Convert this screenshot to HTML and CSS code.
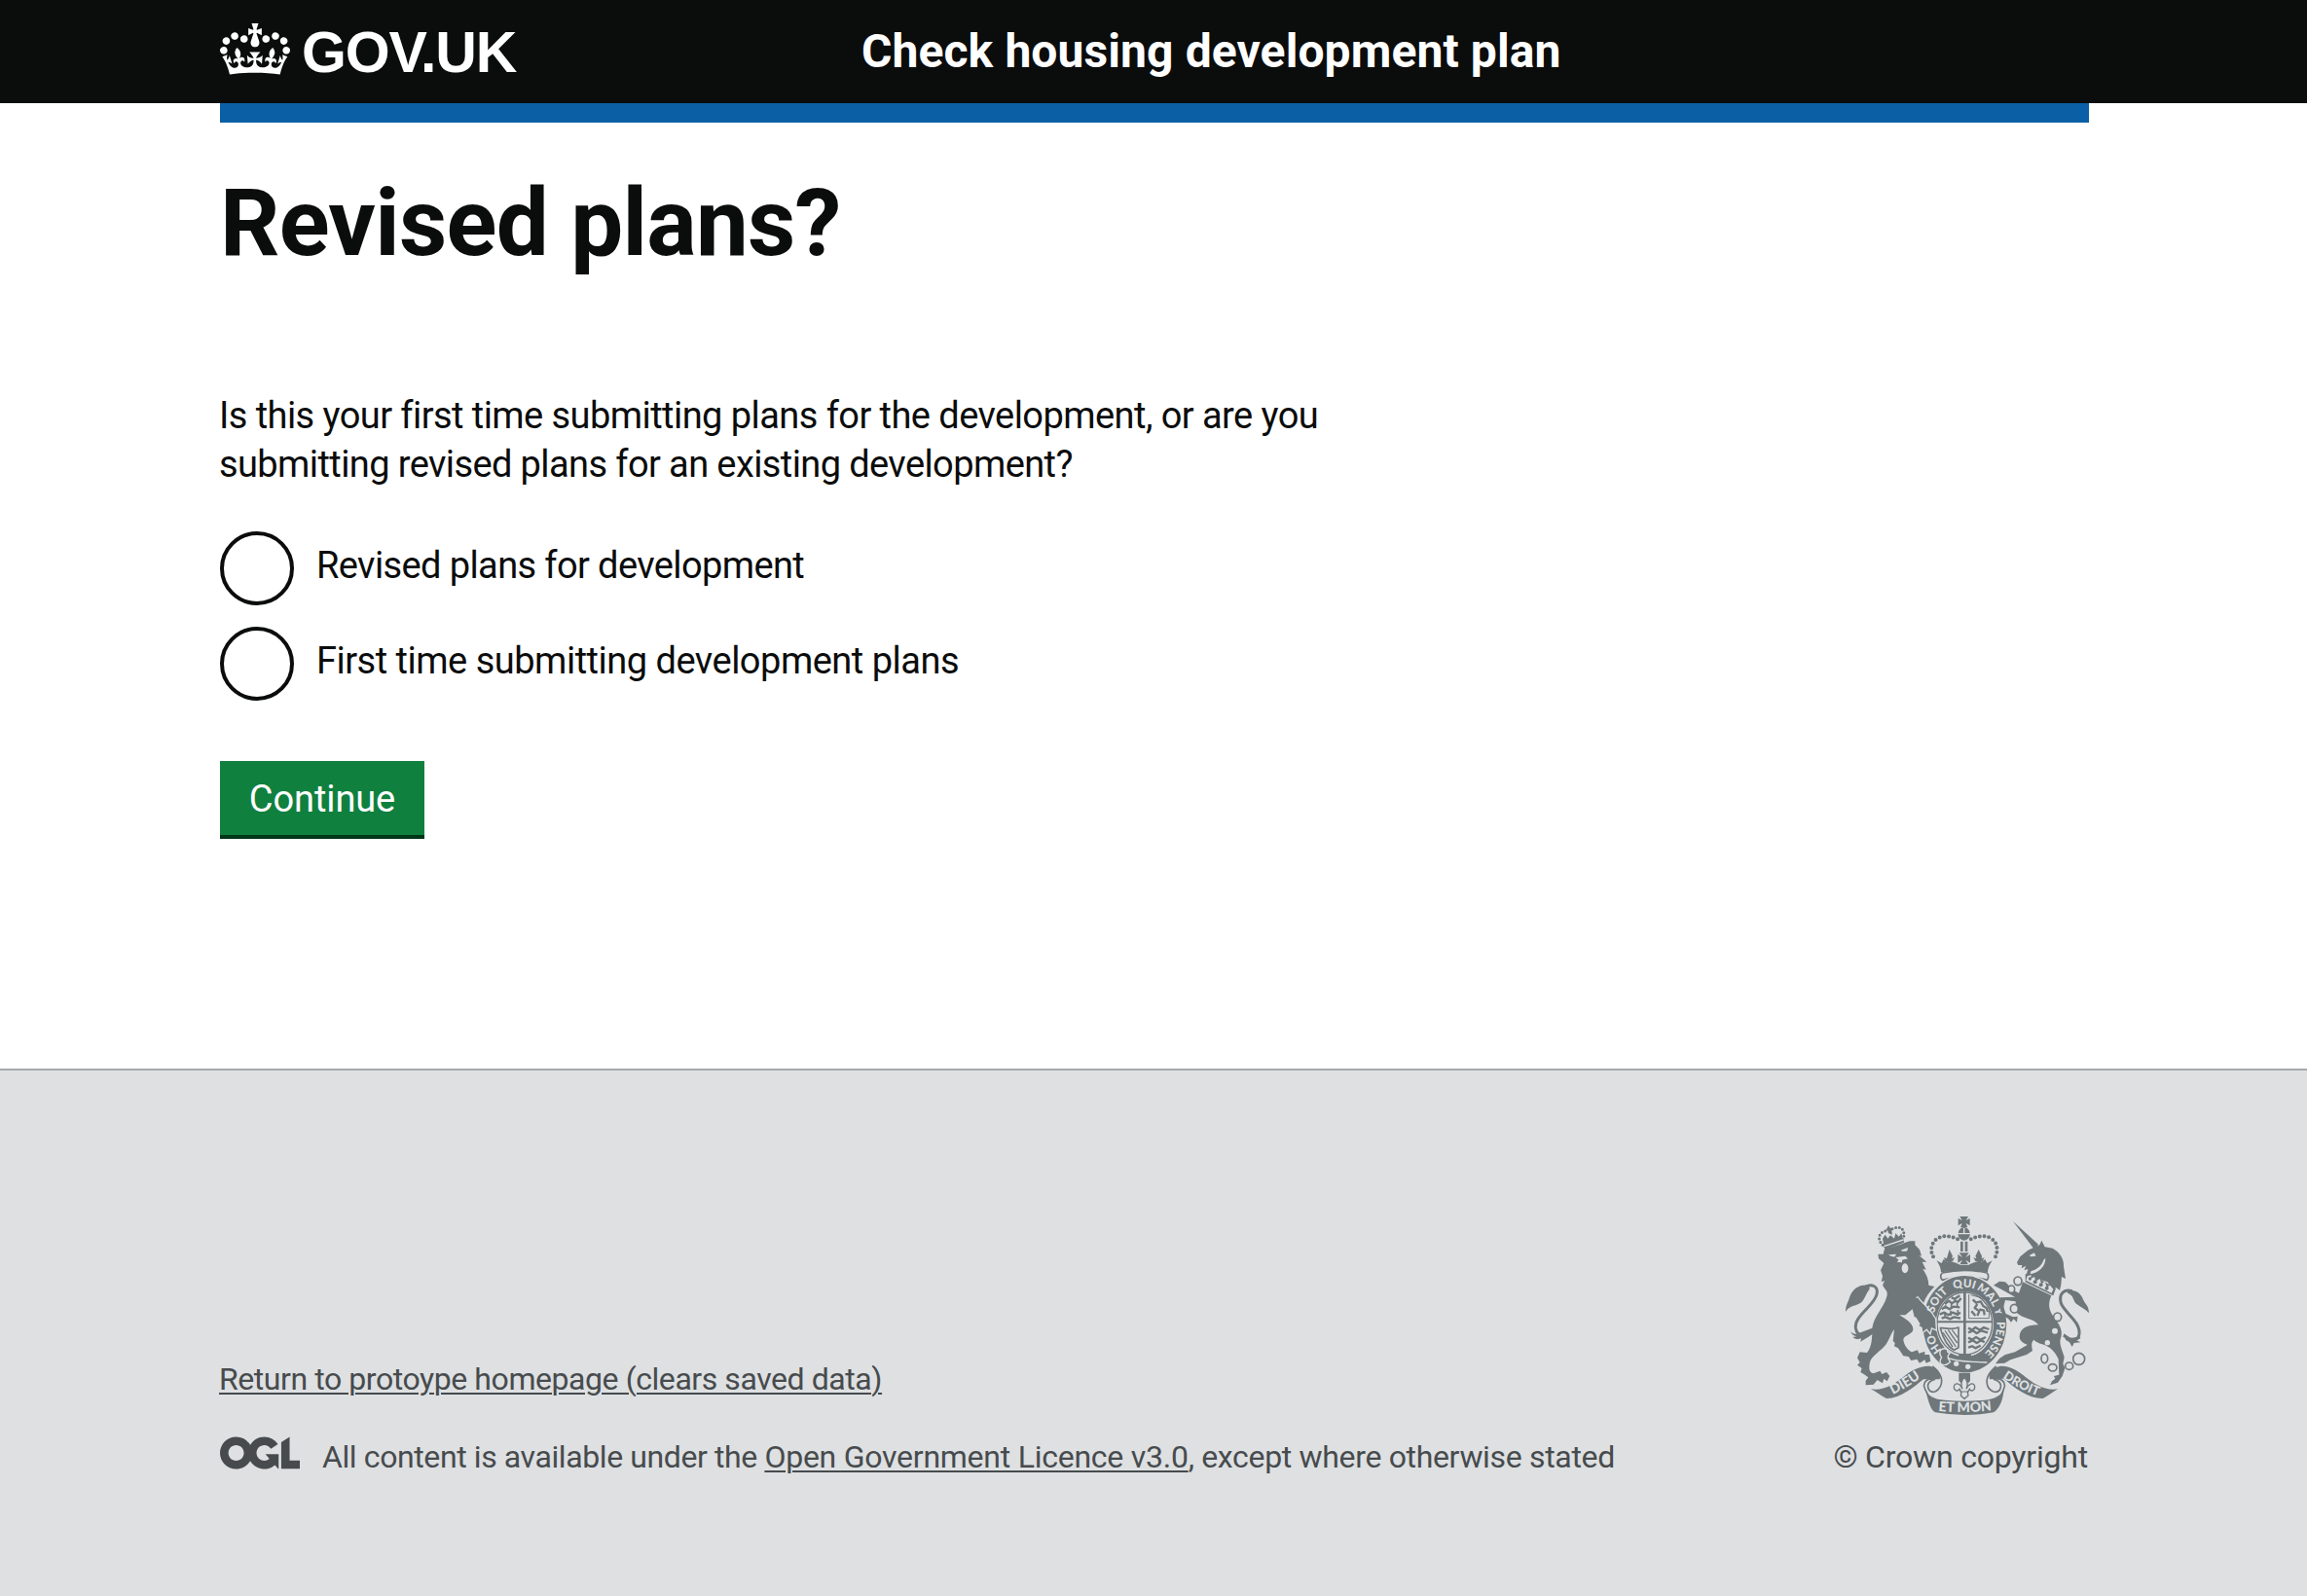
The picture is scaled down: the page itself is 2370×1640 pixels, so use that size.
FILE: index.html
```html
<!DOCTYPE html>
<html lang="en">
<head>
<meta charset="utf-8">
<title>Revised plans? - Check housing development plan</title>
<link rel="stylesheet" href="styles.css">
</head>
<body>
<header class="header">
  <div class="container header-row">
    <a class="logo" href="#">
      <svg class="logo-crown" viewBox="0 0 132 97" width="72" height="53" aria-hidden="true"><path fill="currentColor" fill-rule="evenodd" d="M25 30.2c3.5 1.5 7.7-.2 9.1-3.7 1.5-3.6-.2-7.8-3.9-9.2-3.6-1.4-7.6.3-9.1 3.9-1.4 3.5.3 7.5 3.9 9zM9 39.5c3.6 1.5 7.8-.2 9.2-3.7 1.5-3.6-.2-7.8-3.9-9.1-3.6-1.5-7.6.2-9.1 3.8-1.4 3.5.3 7.5 3.8 9zM4.4 57.2c3.5 1.5 7.7-.2 9.1-3.8 1.5-3.6-.2-7.7-3.9-9.1-3.5-1.5-7.6.3-9.1 3.8-1.4 3.5.3 7.6 3.9 9.1zm38.3-21.4c3.5 1.5 7.7-.2 9.1-3.8 1.5-3.6-.2-7.7-3.9-9.1-3.6-1.5-7.6.3-9.1 3.8-1.3 3.6.4 7.7 3.9 9.1zm64.4-5.6c-3.6 1.5-7.8-.2-9.1-3.7-1.5-3.6.2-7.8 3.8-9.2 3.6-1.4 7.7.3 9.2 3.9 1.3 3.5-.4 7.5-3.9 9zm15.9 9.3c-3.6 1.5-7.7-.2-9.1-3.7-1.5-3.6.2-7.8 3.7-9.1 3.6-1.5 7.7.2 9.2 3.8 1.5 3.5-.3 7.5-3.8 9zm4.7 17.7c-3.6 1.5-7.8-.2-9.2-3.8-1.5-3.6.2-7.7 3.9-9.1 3.6-1.5 7.7.3 9.2 3.8 1.3 3.5-.4 7.6-3.9 9.1zM89.3 35.8c-3.6 1.5-7.8-.2-9.2-3.8-1.4-3.6.2-7.7 3.9-9.1 3.6-1.5 7.7.3 9.2 3.8 1.4 3.6-.3 7.7-3.9 9.1zM69.7 17.7l8.9 4.7V9.3l-8.9 2.8c-.2-.3-.5-.6-.9-.9L72.4 0H59.6l3.5 11.2c-.3.3-.6.5-.9.9l-8.8-2.8v13.1l8.8-4.7c.3.3.6.7.9.9l-5 15.4v.1c-.2.8-.4 1.6-.4 2.4 0 4.1 3.1 7.5 7 8.1h.2c.3 0 .7.1 1 .1.4 0 .7 0 1-.1h.2c4-.6 7.1-4.1 7.1-8.1 0-.8-.1-1.7-.4-2.4V34l-5.1-15.4c.4-.2.7-.6 1-.9zM66 92.8c16.9 0 32.8 1.1 47.1 3.2 4-16.9 8.9-26.7 14-33.5l-9.6-3.4c1 4.9 1.1 7.2 0 10.2-1.5-1.4-3-4.3-4.2-8.7L108.6 76c2.8-2 5-3.2 7.5-3.3-4.4 9.4-10 11.9-13.6 11.2-4.3-.8-6.3-4.6-5.6-7.9 1-4.7 5.7-5.9 8-.5 4.3-8.7-3-11.4-7.6-8.8 7.1-7.2 7.9-13.5 2.1-21.1-8 6.1-8.1 12.3-4.5 20.8-4.7-5.4-12.1-2.5-9.5 6.2 3.4-5.2 7.9-2 7.2 3.1-.6 4.3-6.4 7.8-13.5 7.2-10.3-.9-10.9-8-11.2-13.8 2.5-.5 7.1 1.8 11 7.3L80.2 60c-4.1 4.4-8 5.3-12.3 5.4 1.4-4.4 8-11.6 8-11.6H55.5s6.4 7.2 7.9 11.6c-4.2-.1-8-1-12.3-5.4l1.4 16.4c3.9-5.5 8.5-7.7 10.9-7.3-.3 5.8-.9 12.8-11.1 13.8-7.2.6-12.9-2.9-13.5-7.2-.7-5 3.8-8.3 7.1-3.1 2.7-8.7-4.6-11.6-9.4-6.2 3.7-8.5 3.6-14.7-4.6-20.8-5.8 7.6-5 13.9 2.2 21.1-4.7-2.6-11.9.1-7.7 8.8 2.3-5.5 7.1-4.2 8.1.5.7 3.3-1.3 7.1-5.7 7.9-3.5.7-9-1.8-13.5-11.2 2.5.1 4.7 1.3 7.5 3.3l-4.7-15.4c-1.2 4.4-2.7 7.2-4.3 8.7-1.1-3-.9-5.3 0-10.2l-9.5 3.4c5 6.9 9.9 16.7 14 33.5 14.8-2.1 30.8-3.2 47.7-3.2z"/></svg>
      <span class="logo-text">GOV.UK</span>
    </a>
    <a class="service-name" href="#">Check housing development plan</a>
  </div>
</header>

<div class="container">
  <div class="phase-bar"></div>
  <main class="main">
    <h1 class="heading">Revised plans?</h1>
    <form class="form">
      <p class="question">Is this your first time submitting plans for the development, or are you <span class="question-rest">submitting revised plans for an existing development?</span></p>
      <div class="radios">
        <label class="radio"><input class="radio-input" type="radio" name="plans"><span class="radio-label radio-label-tight">Revised plans for development</span></label>
        <label class="radio"><input class="radio-input" type="radio" name="plans"><span class="radio-label">First time submitting development plans</span></label>
      </div>
      <button class="button" type="button">Continue</button>
    </form>
  </main>
</div>

<footer class="footer">
  <div class="container footer-row">
    <div class="footer-meta">
      <a class="footer-link return-link" href="#">Return to protoype homepage (clears saved data)</a>
      <div class="licence">
        <svg class="ogl" viewBox="0 0 483.2 195.7" width="82" height="34" aria-hidden="true"><path fill="currentColor" d="M421.5 142.8V.1l-50.7 32.3v161.1h112.4v-50.7zm-122.3-9.6A47.12 47.12 0 0 1 221 97.8c0-26 21.1-47.1 47.1-47.1 16.7 0 31.4 8.7 39.7 21.8l42.7-27.2A97.63 97.63 0 0 0 268.1 0c-36.5 0-68.3 20.1-85.1 49.7A98 98 0 0 0 97.8 0C43.9 0 0 43.9 0 97.8s43.9 97.8 97.8 97.8c36.5 0 68.3-20.1 85.1-49.7a97.76 97.76 0 0 0 149.6 25.4l19.4 22.2h3v-87.8h-80l24.3 27.5zM97.8 145c-26 0-47.1-21.1-47.1-47.1s21.1-47.1 47.1-47.1 47.1 21.1 47.1 47.1S123.8 145 97.8 145"/></svg>
        <span class="licence-text">All content is available under the <a class="footer-link licence-link" href="#">Open Government Licence v3.0</a><span class="licence-end">, except where otherwise stated</span></span>
      </div>
    </div>
    <a class="copyright" href="#">
      <svg class="arms" viewBox="78 60 750 612" width="250" height="204" aria-hidden="true">
        <defs>
          <path id="motto-ring" d="M445 506A99 114 0 0 1 346 392A99 114 0 0 1 544 392A99 114 0 0 1 445 506"/>
          <path id="scroll-left" d="M200 620Q262 594 336 538"/>
          <path id="scroll-mid" d="M340 657Q445 670 552 655"/>
          <path id="scroll-right" d="M538 540Q610 596 698 622"/>
        </defs>

        <!-- lion's tail -->
        <path fill="none" stroke="currentColor" stroke-width="9" d="M132 282C158 262 180 276 174 300C166 336 104 366 109 404C114 432 142 434 166 412"/>
        <path d="M150 272C122 268 98 282 90 310C86 326 78 332 78 354C88 336 104 338 122 328C138 318 140 296 152 284zM94 414C100 422 108 424 118 420L166 402L160 422C146 434 132 440 124 446L126 436C116 440 106 438 100 432L112 430C104 428 96 424 94 414z"/>

        <!-- lion -->
        <path d="M178 176L194 176L198 160C228 154 258 142 276 136L292 136L292 148L306 162L312 182L304 180L328 200L314 200L326 224L316 222C328 240 334 256 334 272L352 276C336 294 324 308 318 328L296 310C312 334 340 346 350 364L354 408L342 402L338 416L330 406L320 416L318 404L300 396L314 390L302 372L290 370L284 346L262 364L244 364C262 376 286 388 286 408C286 424 254 426 256 442C260 460 270 472 282 478L300 472L304 482L322 476L322 486L336 486L340 506L326 512L322 502L306 512L298 500L280 504L272 492L256 490L240 466L228 460L230 450L224 444L228 408C214 426 212 446 196 462C176 482 154 494 152 514C150 530 150 540 164 544L184 536L190 546L204 540L214 552L206 568L196 560L192 574L176 564L164 578L140 580L140 566L148 556L134 546L124 540L128 528L114 518L122 510L114 496L122 478L144 480C160 460 160 430 160 404C164 370 196 340 204 310C210 294 202 286 200 284L192 272L198 258L188 262L192 244L186 226L196 204L180 190z"/>
        <g class="cut">
          <path d="M210 178L234 176L230 184Q218 186 210 178zM248 164L270 156L268 166Q256 170 248 164zM232 186L262 182L270 190L252 194L252 202L236 200L242 194z"/>
          <ellipse cx="261" cy="220" rx="10" ry="15"/>
        </g>

        <!-- lion's crown -->
        <path d="M190 148L256 126L258 140L202 162zM210 88L216 96L224 96L220 104L222 116L210 112L208 104L202 102L206 96zM192 128L200 116L208 128L216 118L228 128L232 112L242 122L250 112L254 128L196 150z"/>
        <g fill="none" stroke="currentColor" stroke-width="9" stroke-linecap="round" stroke-dasharray="0 11"><path d="M192 148C170 124 186 104 210 104"/><path d="M222 98C244 88 264 96 256 128"/></g>
        <path class="cut-line" d="M196 152L256 132"/>

        <!-- royal crown -->
        <path d="M430 60H456L449 72L461 66V88L449 81L454 94H432L437 81L425 88V66L437 72zM425 111Q428 95 443 94Q458 95 461 111zM424 115H462Q458 133 443 134Q428 133 424 115zM432 137H440V168H432zM446 137H454V168H446z"/>
        <path class="cut-line" stroke-width="3" d="M443 96V111"/>
        <g fill="none" stroke="currentColor" stroke-width="12" stroke-linecap="round" stroke-dasharray="0 14.2"><path d="M348 184C338 166 340 140 364 126C384 116 406 122 424 130"/><path d="M540 184C548 166 548 140 524 126C504 116 482 122 464 130"/></g>
        <path d="M358 196L374 204L380 192L392 200L390 188L398 162L408 182L402 198L420 204L432 210L456 210L468 204L486 198L478 182L488 162L498 182L496 200L508 192L514 204L530 196C520 210 516 222 516 232Q445 222 372 232C372 220 366 206 358 196z"/>
        <ellipse class="cut" cx="443" cy="190" rx="22" ry="19"/>
        <path d="M428 172H458L448 186L462 177V203L448 194L456 208H430L438 194L424 203V177L438 186zM380 186L390 190L398 184L406 190L414 186L408 198L386 198zM472 186L480 190L488 184L498 190L506 186L500 198L478 198z"/>
        <path fill="none" stroke="currentColor" stroke-width="5" d="M376 234Q445 218 514 234Q522 244 514 256Q445 236 376 256Q366 244 376 234z"/>

        <!-- garter -->
        <ellipse class="outlined" cx="445" cy="392" rx="129" ry="149"/>
        <ellipse class="cut" cx="445" cy="392" rx="89" ry="101"/>
        <ellipse cx="445" cy="390" rx="85" ry="96" fill="none" stroke="currentColor" stroke-width="4"/>
        <path d="M359 382H531V388H359zM441 292H449V490H441z"/>
        <path d="M428 484L464 484L470 508L420 508z"/>

        <!-- quarterings -->
        <g fill="none" stroke="currentColor" stroke-width="7" stroke-linejoin="round">
          <path d="M384 330l12-10 10 8 10-8 8 4 10-12M374 346l12-8 12 8 12-8 20 2M368 362l14-6 12 8 14-8 14 6 10-6M374 374l12-4 14 6 12-6 20 4M404 310l10 4 16-10"/>
          <path stroke-width="5" d="M386 334v10M404 328v14M422 322v16M384 354v14M402 350v16M424 348v18"/>
          <path d="M456 404l12 6 10-8 14 8 12-8 16 6M456 418l14-6 12 8 14-8 20 6M456 434l12 6 12-8 14 8 16-8M456 448l14-6 12 8 14-8 10 6M456 464l12-4 10 6 16-8"/>
          <path stroke-width="3" d="M458 300V374H520V340L494 310L464 302"/>
          <path d="M470 316l10 10 14-4 8 14 10 6 4 12M484 330l-8 12 14 10-6 14M490 346l14 4 2 14M466 352l12 14"/>
          <path stroke-width="5" d="M370 404C392 402 402 412 426 402V464L412 472C394 462 378 434 370 404z"/>
          <path stroke-width="4" d="M384 412L418 462M394 410L422 450M406 410L424 434M378 418L408 462"/>
        </g>

        <!-- lion's paw over the garter -->
        <path class="outlined" d="M298 308C310 326 330 340 342 358L354 376L356 408L342 402L338 418L328 406L316 416L314 402L304 396L314 386z"/>
        <path d="M286 310L300 312C310 328 326 342 336 356L334 400L312 398L296 372L290 350z"/>

        <!-- garter motto -->
        <g class="motto" font-size="35">
          <text><textPath href="#motto-ring" startOffset="108">HO</textPath></text>
          <text><textPath href="#motto-ring" startOffset="241">SOIT</textPath></text>
          <text><textPath href="#motto-ring" startOffset="333">QUI</textPath></text>
          <text><textPath href="#motto-ring" startOffset="424">MAL Y</textPath></text>
          <text><textPath href="#motto-ring" startOffset="548">PENSE</textPath></text>
        </g>
        <path class="cut-line" d="M372 484Q396 506 470 508L514 510"/>
        <path class="outlined" d="M372 474Q380 466 390 472Q388 480 396 482Q386 492 398 508Q386 520 374 514Q368 508 376 494Q368 484 372 474z"/>
        <g class="cut"><circle cx="419" cy="514" r="8"/><circle cx="455" cy="523" r="8"/></g>

        <!-- unicorn -->
        <path d="M594 75L672 146L660 162z"/>
        <path d="M606 202L616 184L640 164L662 154L676 148L682 134L692 154L716 158C738 170 752 192 750 214L756 252L744 246L742 270L738 288L728 280L714 282L700 262L668 252L636 236L640 222L628 226L634 212L620 220L622 210L610 210z"/>
        <path class="cut" d="M644 180L660 172L664 182L650 184zM694 188C694 214 676 232 646 238L650 228C672 222 684 208 688 194z"/>
        <path d="M632 238L644 234L726 282L718 304L632 262z"/>
        <path class="cut" d="M638 244L650 240L648 252L660 246L664 260L676 252L682 268L692 260L698 278L708 272L718 284L712 298L634 258z"/>
        <g><circle cx="646" cy="252" r="5"/><circle cx="662" cy="262" r="6"/><circle cx="680" cy="271" r="6"/><circle cx="698" cy="281" r="6"/></g>
        <path fill="none" stroke="currentColor" stroke-width="4" d="M634 260L716 300"/>
        <path d="M624 262L712 304C698 336 708 354 722 374C738 394 750 414 740 438C736 456 748 478 752 494L748 514L754 528L746 552L732 572L708 580L714 568L724 560L720 552L736 548L734 500C724 478 710 462 684 454C672 450 664 446 658 440C648 450 652 462 654 474L636 486L586 502L568 512L540 514L552 498L570 486L600 478L638 456C634 452 616 450 614 432C614 404 640 394 672 394C656 372 626 378 602 354L602 322L570 318L564 342L572 360L594 370L608 368L606 386L596 376L588 386L580 376L562 364L548 326L554 310L600 308L560 286L534 272L552 260L570 262L596 288L612 296z"/>
        <g class="cut"><circle cx="723" cy="413" r="9"/><circle cx="700" cy="449" r="8"/></g>
        <g fill="#dee0e2" stroke="currentColor" stroke-width="5">
          <ellipse cx="609" cy="259" rx="12" ry="13"/><ellipse cx="589" cy="284" rx="10" ry="11"/><ellipse cx="598" cy="344" rx="12" ry="13"/>
          <ellipse cx="731" cy="370" rx="12" ry="13"/><ellipse cx="691" cy="498" rx="10" ry="14"/><ellipse cx="716" cy="526" rx="13" ry="11"/>
          <ellipse cx="767" cy="521" rx="12" ry="11"/><circle cx="797" cy="499" r="18"/>
        </g>
        <path fill="none" stroke="currentColor" stroke-width="9" d="M776 290C750 282 734 300 742 328C752 356 802 384 798 422C794 446 772 444 750 426"/>
        <path d="M762 288C784 284 804 296 810 316C816 330 828 336 828 358C816 344 806 342 790 330C778 320 782 302 762 296zM750 420L770 436L800 430L802 436L790 442L802 448L782 450L776 462L768 448L756 440z"/>

        <!-- fleur-de-lis -->
        <path d="M427 542H462V566L456 574L444 554L434 574L427 566z"/>
        <path fill="#dee0e2" stroke="currentColor" stroke-width="4" d="M444 556C456 568 456 578 450 592C460 570 476 572 476 586C476 598 464 600 460 592L454 602L456 612L444 622L433 612L435 602L429 592C424 600 412 598 412 586C412 572 430 570 438 592C432 578 432 568 444 556z"/>
        <path d="M430 600H458" stroke="currentColor" stroke-width="3"/>

        <!-- scroll -->
        <path d="M156 592C196 598 230 576 264 548C294 526 330 514 352 526C368 536 372 548 368 562L318 562C288 586 246 622 204 621C190 614 174 602 156 592z"/>
        <path d="M732 592C692 598 658 576 624 548C594 526 566 514 540 526C524 536 518 548 522 562L566 560C598 588 642 622 686 621C700 614 716 602 732 592z"/>
        <path fill="none" stroke="currentColor" stroke-width="5" d="M346 522C376 548 378 566 370 584C362 600 346 606 336 596C326 580 334 566 354 562C330 556 318 570 320 584C324 600 332 604 334 618M542 522C512 548 510 566 516 584C524 600 542 606 552 596C562 580 554 566 534 562C558 556 570 570 568 584C564 600 558 604 556 618"/>
        <path d="M322 590C330 612 350 624 384 626Q445 632 506 626C540 622 560 610 566 590C564 626 552 652 534 664Q445 680 354 664C336 652 334 626 322 590z"/>
        <g class="motto" font-size="42">
          <text><textPath href="#scroll-left" startOffset="48%">DIEU</textPath></text>
          <text><textPath href="#scroll-mid" startOffset="50%">ET MON</textPath></text>
          <text font-size="39"><textPath href="#scroll-right" startOffset="50%">DROIT</textPath></text>
        </g>
      </svg>
      <span class="copyright-text">© Crown copyright</span>
    </a>
  </div>
</footer>
</body>
</html>
```
FILE: styles.css
```css
* { box-sizing: border-box; }

body {
  margin: 0;
  background: #fff;
  color: #0b0c0c;
  font-family: Roboto, "Liberation Sans", sans-serif;
  font-size: 38px;
  line-height: 50px;
}

a { color: inherit; text-decoration: none; }

.container { width: 1920px; margin: 0 224px 0 226px; }

.header { height: 106px; background: #0b0c0c; color: #fff; }
.header-row { display: flex; align-items: flex-start; padding-top: 23px; }
.logo { display: flex; width: 659px; gap: 12px; }
.logo-crown { margin-top: 1px; }
.logo-text {
  margin-top: 1px;
  font: bold 59px/60px "Liberation Sans", Arial, sans-serif;
  letter-spacing: -1.2px;
}
.service-name { font-size: 48px; font-weight: 700; line-height: 60px; letter-spacing: .1px; }

.phase-bar { height: 20px; background: #0b5fa5; }
.main { height: 972px; padding-top: 53px; }
.heading { margin: 0 0 123px; font-size: 96px; line-height: 100px; letter-spacing: -.7px; }
.question { width: 1150px; margin: 0 0 44px -1px; letter-spacing: -.56px; }
.question-rest { display: block; letter-spacing: -.6px; }

.radios { display: flex; flex-direction: column; gap: 22px; margin-bottom: 62px; }
.radio { display: flex; gap: 23px; height: 76px; letter-spacing: -.5px; }
.radio-input {
  appearance: none;
  width: 76px;
  height: 76px;
  margin: 0;
  border: 4px solid #0b0c0c;
  border-radius: 50%;
}
.radio-label { padding-top: 10px; }
.radio-label-tight { letter-spacing: -.61px; }

.button {
  display: block;
  width: 210px;
  height: 80px;
  padding: 14px 0 12px;
  border: 0;
  border-bottom: 4px solid #003618;
  background: #10803f;
  color: #fff;
  font: inherit;
  letter-spacing: -.1px;
}

.footer {
  height: 542px;
  padding-top: 150px;
  border-top: 2px solid #a5a9ac;
  background: #dee0e2;
  color: #474b4d;
  font-size: 32px;
  line-height: 40px;
  letter-spacing: -.4px;
}
.footer-row { display: flex; justify-content: space-between; align-items: flex-end; }
.footer-meta { display: flex; flex-direction: column; align-items: flex-start; gap: 40px; }
.footer-link { text-decoration: underline; text-decoration-thickness: 2px; text-underline-offset: 3px; }
.return-link { margin-left: -1px; letter-spacing: -.43px; }
.licence { display: flex; gap: 23px; }
.licence-link { letter-spacing: -.25px; }
.licence-end { letter-spacing: -.33px; }
.ogl { margin-top: -1px; }
.copyright { display: flex; flex-direction: column; align-items: flex-end; gap: 23px; letter-spacing: -.2px; }
.copyright-text { margin-right: 1px; }

.arms { color: #6f777b; fill: currentColor; }
.cut { fill: #dee0e2; }
.cut-line { fill: none; stroke: #dee0e2; stroke-width: 4px; }
.outlined { stroke: #dee0e2; stroke-width: 8px; paint-order: stroke; }
.motto {
  fill: #dee0e2;
  font-family: Lato, "Liberation Sans", sans-serif;
  font-weight: 900;
  letter-spacing: 0;
  text-anchor: middle;
}
```
